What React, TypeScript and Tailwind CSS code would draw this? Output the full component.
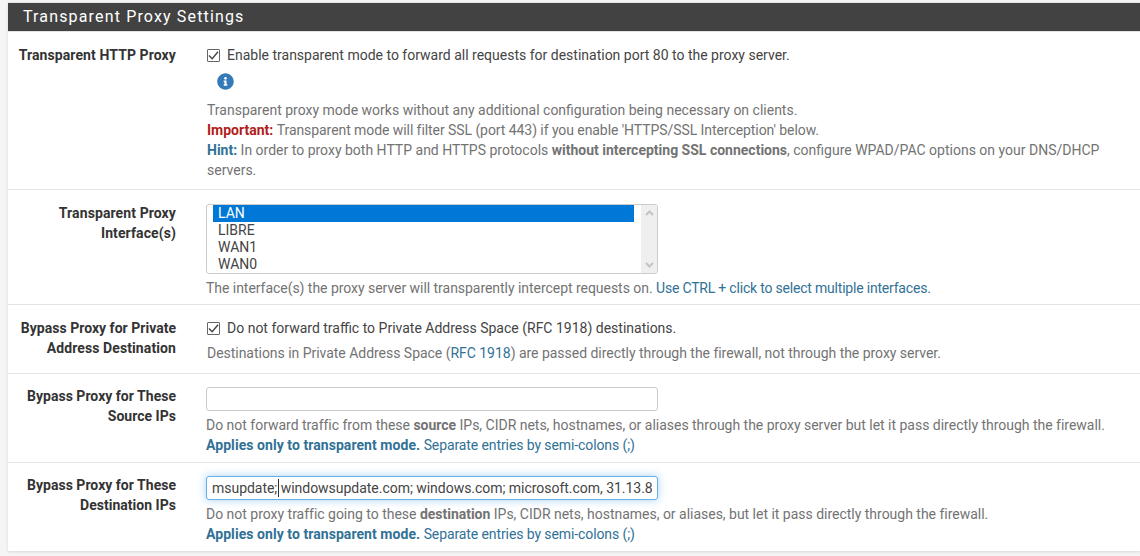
import { FaInfoCircle } from 'react-icons/fa';
import type { ReactNode } from 'react';

function Row({ label, children, last }: { label: ReactNode; children: ReactNode; last?: boolean }) {
  return (
    <div className={`flex ${last ? '' : 'border-b border-[#e4e4e4]'}`}>
      <div className="w-[168px] shrink-0 pl-2 text-right font-bold leading-[20px] tracking-[0.1px] text-[#333]">{label}</div>
      <div className="ml-[30px] min-w-0 flex-1">{children}</div>
    </div>
  );
}

function Check({ text }: { text: string }) {
  return (
    <div className="ml-px flex items-center gap-[7px] leading-[20px] text-[#444]">
      <span className="flex h-[13px] w-[13px] shrink-0 items-center justify-center rounded-[1px] border border-[#666] bg-white">
        <svg viewBox="0 0 13 13" className="h-[13px] w-[13px] shrink-0" fill="none" stroke="#444" strokeWidth="1.4">
          <path d="M2 6.5 5.2 9.7 11 2.8" />
        </svg>
      </span>
      {text}
    </div>
  );
}

function Help({ children }: { children: ReactNode }) {
  return <div className="leading-[20px] text-[#737373]">{children}</div>;
}

const Blue = ({ children }: { children: ReactNode }) => <span className="text-[#317196]">{children}</span>;

export default function App() {
  return (
    <div className="h-[556px] w-[1140px] overflow-hidden bg-[#f5f5f5] pl-2 pt-[2px] font-['Roboto',sans-serif] text-[14px]">
      <div className="border-t border-[#e6e6e6] bg-white shadow-[0_1px_3px_rgba(0,0,0,0.12)]">
        <h2 className="flex h-[29px] items-center border-b border-[#e4e4e4] bg-[#424242] pl-[15px] text-[16px] font-normal tracking-[1.15px] text-white">
          Transparent Proxy Settings
        </h2>

        <Row label={<div className="pt-[13px]">Transparent HTTP Proxy</div>}>
          <div className="h-[157px] pt-[13px]">
            <Check text="Enable transparent mode to forward all requests for destination port 80 to the proxy server." />
            <div className="mb-[9px] mt-[8px] h-[18px] pl-[11px]">
              <FaInfoCircle size={17} className="text-[#337ab7]" />
            </div>
            <div className="ml-px">
              <Help>
                Transparent proxy mode works without any additional configuration being necessary on clients.
                <br />
                <b className="text-[#b01c1c]">Important:</b>{' '}
                <span className="tracking-[-0.07px]">Transparent mode will filter SSL (port 443) if you enable 'HTTPS/SSL Interception' below.</span>
                <br />
                <b className="text-[#317196]">Hint:</b> In order to proxy both HTTP and HTTPS protocols <b>without intercepting SSL connections</b>, configure WPAD/PAC options on your DNS/DHCP
                <br />
                servers.
              </Help>
            </div>
          </div>
        </Row>

        <Row
          label={
            <div className="pt-[13px]">
              Transparent Proxy
              <br />
              Interface(s)
            </div>
          }
        >
          <div className="h-[114px] pt-[14px]">
            <div className="flex h-[70px] w-[452px] overflow-hidden rounded-[3px] border border-[#ccc] bg-white">
              <div className="flex-1 pl-[6px] pr-[7px] text-[14px] leading-[17px] text-[#444]">
                <div className="bg-[#0078d7] pl-[5px] text-white">LAN</div>
                <div className="pl-[5px]">LIBRE</div>
                <div className="pl-[5px]">WAN1</div>
                <div className="pl-[5px]">WAN0</div>
              </div>
              <div className="flex w-[16px] flex-col items-center justify-between bg-[#efefef] py-[5px]">
                <svg viewBox="0 0 9 6" className="h-[6px] w-[9px]" fill="none" stroke="#c4c4c4" strokeWidth="2"><path d="M1 5 4.5 1.5 8 5" /></svg>
                <svg viewBox="0 0 9 6" className="h-[6px] w-[9px]" fill="none" stroke="#c4c4c4" strokeWidth="2"><path d="M1 1 4.5 4.5 8 1" /></svg>
              </div>
            </div>
            <div className="mt-[4px]">
              <Help>
                <span className="tracking-[-0.04px]">The interface(s) the proxy server will transparently intercept requests on.</span>{' '}
                <span className="tracking-[-0.2px]"><Blue>Use CTRL + click to select multiple interfaces.</Blue></span>
              </Help>
            </div>
          </div>
        </Row>

        <Row
          label={
            <div className="pt-[13px]">
              <span className="tracking-[0.02px]">Bypass Proxy for Private</span>
              <br />
              Address Destination
            </div>
          }
        >
          <div className="h-[68px] pt-[13px]">
            <Check text="Do not forward traffic to Private Address Space (RFC 1918) destinations." />
            <div className="ml-px mt-[5px] tracking-[-0.03px]">
              <Help>
                Destinations in Private Address Space (<Blue>RFC 1918</Blue>) are passed directly through the firewall, not through the proxy server.
              </Help>
            </div>
          </div>
        </Row>

        <Row
          label={
            <div className="pt-[12px] tracking-[0.02px]">
              Bypass Proxy for These
              <br />
              Source IPs
            </div>
          }
        >
          <div className="h-[88px] pt-[13px]">
            <input readOnly className="block h-[24px] w-[452px] rounded-[3px] border border-[#ccc] bg-white px-[6px] outline-none" />
            <div className="mt-[4px]">
              <Help>
                <span className="tracking-[-0.015px]">Do not forward traffic from these <b>source</b> IPs, CIDR nets, hostnames, or aliases through the proxy server but let it pass directly through the firewall.</span>
                <br />
                <Blue>
                  <b className="tracking-[0.06px]">Applies only to transparent mode.</b> <span className="tracking-[-0.1px]">Separate entries by semi-colons (;)</span>
                </Blue>
              </Help>
            </div>
          </div>
        </Row>

        <Row
          last
          label={
            <div className="pt-[12px] tracking-[0.02px]">
              Bypass Proxy for These
              <br />
              Destination IPs
            </div>
          }
        >
          <div className="h-[88px] pt-[13px]">
            <div className="relative w-[452px]">
              <input
                readOnly
                value="msupdate; windowsupdate.com; windows.com; microsoft.com, 31.13.8"
                className="block h-[24px] w-full rounded-[3px] border border-[#66afe9] bg-white px-[5px] tracking-[-0.03px] text-[#444] shadow-[0_0_8px_rgba(102,175,233,0.6)] outline-none"
              />
              <span className="absolute left-[72px] top-[3px] h-[18px] w-px bg-[#333]" />
            </div>
            <div className="mt-[4px]">
              <Help>
                <span className="tracking-[-0.015px]">Do not proxy traffic going to these <b>destination</b> IPs, CIDR nets, hostnames, or aliases, but let it pass directly through the firewall.</span>
                <br />
                <Blue>
                  <b className="tracking-[0.06px]">Applies only to transparent mode.</b> <span className="tracking-[-0.1px]">Separate entries by semi-colons (;)</span>
                </Blue>
              </Help>
            </div>
          </div>
        </Row>
      </div>
    </div>
  );
}
